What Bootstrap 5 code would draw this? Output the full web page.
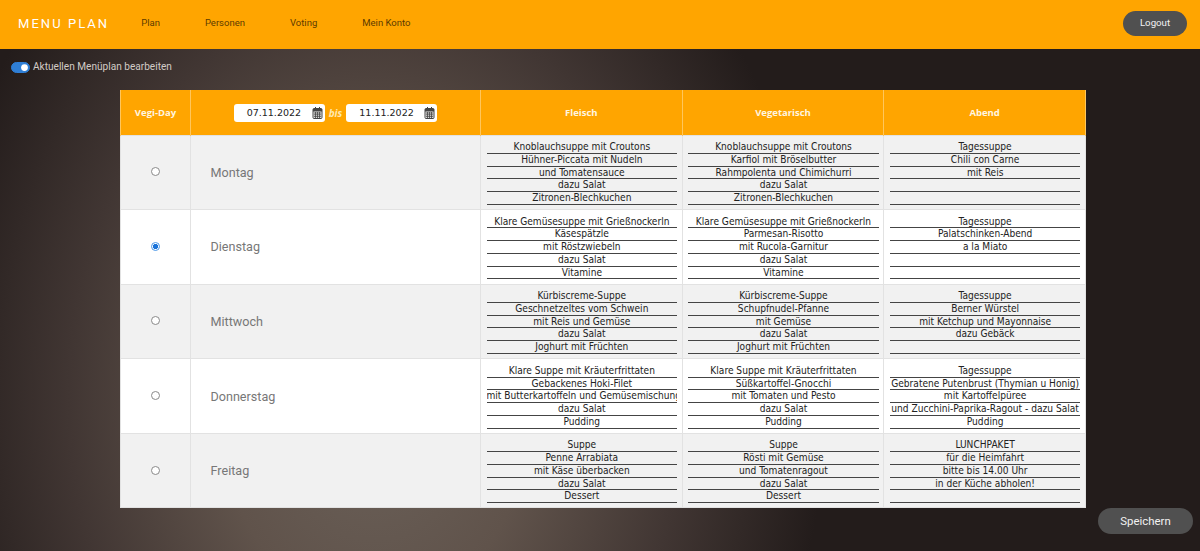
<!DOCTYPE html>
<html lang="de">
<head>
    <meta charset="UTF-8">
    <meta name="viewport" content="width=device-width, initial-scale=1.0">
    <title>Menu Plan</title>
    <link href="https://cdn.jsdelivr.net/npm/bootstrap@5.3.0/dist/css/bootstrap.min.css" rel="stylesheet">
    <style>
        body {
            height: 551px;
            overflow: hidden;
            font-family: Roboto, sans-serif;
            background: radial-gradient(ellipse 450px 600px at 375px 400px, #6c625a 0%, #60534b 35%, #413633 68%, #231c1b 100%) #211a19;
        }
        .top-bar {
            height: 49px;
            background: #ffa500;
            padding: 0 7px 2px 18px;
        }
        .top-bar .navbar-brand {
            font-size: 13px;
            letter-spacing: 2.05px;
            color: #fff;
            margin-right: 32px;
            padding: 0;
        }
        .top-bar .nav-link {
            font-size: 9.5px;
            color: #5c3b00;
            padding: 0;
            margin-right: 45px;
        }
        .pill-btn {
            background: #505050;
            color: #f2f2f2;
            border: 0;
            border-radius: 14px;
        }
        .logout-btn { width: 64px; height: 25px; font-size: 9.7px; padding: 0; margin-right: 6px; }
        .save-btn { width: 95px; height: 26px; font-size: 11.4px; padding: 0; }
        .save-row { padding-right: 7px; }
        .edit-toggle {
            height: 41px;
            padding: 0 0 5px 11px;
            font-size: 10.1px;
            color: #d2cbc6;
        }
        .edit-toggle .form-check { min-height: 0; margin: 0 3px 0 0; padding: 0; display: flex; }
        .edit-toggle .form-check-input { width: 19px; height: 11px; margin: 0; background-color: #2f7fd6; border-color: #2f7fd6; }
        .plan-table {
            width: 965px;
            height: 418px;
            margin: 0 0 0 120px;
            table-layout: fixed;
            border-collapse: collapse;
            background: #fff;
        }
        .plan-table th {
            height: 45px;
            background: #ffa500;
            color: #fff6e0;
            font-family: "Open Sans", sans-serif;
            font-size: 9.5px;
            font-weight: 700;
            text-align: center;
            border: 1px solid #ffc65c;
            border-width: 0 1px;
            padding: 2px 0 0;
            vertical-align: middle;
        }
        .plan-table td {
            height: 74.6px;
            border: 1px solid #e2e2e2;
            padding: 5.5px 4.5px 0 5.5px;
            vertical-align: top;
        }
        .plan-table tbody tr:nth-child(odd) td { background: #f1f1f1; }
        .plan-table td.mid { vertical-align: middle; padding: 0; }
        .col-vegi { width: 70px; }
        .col-date { width: 290px; }
        .col-meal { width: 201.67px; }
        .plan-table .form-check-input {
            display: block;
            width: 9px; height: 9px; margin: 0 auto 1px; float: none;
            border-color: #8a8a8a; background-color: #fff;
        }
        .plan-table .form-check-input:checked {
            background-image: radial-gradient(circle, #1a73d9 52%, #fff 58%);
            border-color: #4a97e8;
        }
        .plan-table td.day-name {
            font-size: 12.6px;
            color: #777;
            padding: 2px 0 0 19.5px;
        }
        .meal-line {
            height: 12.75px;
            line-height: 12px;
            font-family: "DejaVu Sans Condensed", "DejaVu Sans", sans-serif;
            font-size: 10.1px;
            color: #222;
            text-align: center;
            white-space: nowrap;
            overflow: hidden;
            border-bottom: 1px solid #444;
        }
        .date-box {
            width: 91px;
            height: 18px;
            background: #fff;
            border-radius: 3px;
            font-family: "DejaVu Sans", sans-serif;
            font-size: 9.5px;
            font-weight: 400;
            color: #222;
            padding: 0 2px 0 13px;
        }
        .date-sep {
            font-style: italic;
            font-weight: 700;
            color: #ffe9b0;
            font-size: 10px;
        }
    </style>
</head>
<body>
    <nav class="navbar top-bar d-flex flex-nowrap justify-content-between">
        <div class="d-flex align-items-center">
            <a class="navbar-brand" href="#">MENU PLAN</a>
            <div class="d-flex align-items-center">
                <a class="nav-link" href="#">Plan</a>
                <a class="nav-link" href="#">Personen</a>
                <a class="nav-link" href="#">Voting</a>
                <a class="nav-link" href="#">Mein Konto</a>
            </div>
        </div>
        <button type="button" class="btn pill-btn logout-btn">Logout</button>
    </nav>

    <div class="edit-toggle d-flex align-items-center">
        <div class="form-check form-switch">
            <input class="form-check-input" type="checkbox" id="editPlan" checked>
        </div>
        <label for="editPlan">Aktuellen Menüplan bearbeiten</label>
    </div>

    <table class="plan-table" id="planTable">
        <colgroup>
            <col class="col-vegi"><col class="col-date"><col class="col-meal"><col class="col-meal"><col class="col-meal">
        </colgroup>
        <thead>
            <tr>
                <th>Vegi-Day</th>
                <th>
                    <div class="d-flex justify-content-center align-items-center gap-1">
                        <span class="date-box d-flex align-items-center justify-content-between">07.11.2022
                            <svg width="11" height="12" viewBox="0 0 11 12"><rect x="1" y="1.5" width="9" height="10" rx="1" fill="#e8e8e8" stroke="#444"/><path d="M1 2h9v2.5H1z" fill="#444"/><path d="M3.5 0v2.5M7.5 0v2.5" stroke="#444"/><path d="M2 6h7M2 7.8h7M2 9.6h7M3.5 5v6M5.5 5v6M7.5 5v6" stroke="#444" stroke-width=".8"/></svg>
                        </span>
                        <span class="date-sep">bis</span>
                        <span class="date-box d-flex align-items-center justify-content-between">11.11.2022
                            <svg width="11" height="12" viewBox="0 0 11 12"><rect x="1" y="1.5" width="9" height="10" rx="1" fill="#e8e8e8" stroke="#444"/><path d="M1 2h9v2.5H1z" fill="#444"/><path d="M3.5 0v2.5M7.5 0v2.5" stroke="#444"/><path d="M2 6h7M2 7.8h7M2 9.6h7M3.5 5v6M5.5 5v6M7.5 5v6" stroke="#444" stroke-width=".8"/></svg>
                        </span>
                    </div>
                </th>
                <th>Fleisch</th>
                <th>Vegetarisch</th>
                <th>Abend</th>
            </tr>
        </thead>
        <tbody></tbody>
    </table>

    <div class="d-flex justify-content-end save-row">
        <button type="button" class="btn pill-btn save-btn">Speichern</button>
    </div>

    <script src="https://cdn.jsdelivr.net/npm/bootstrap@5.3.0/dist/js/bootstrap.bundle.min.js"></script>
    <script>
        const plan = [
            { day: 'Montag', meals: [
                ['Knoblauchsuppe mit Croutons', 'Hühner-Piccata mit Nudeln', 'und Tomatensauce', 'dazu Salat', 'Zitronen-Blechkuchen'],
                ['Knoblauchsuppe mit Croutons', 'Karfiol mit Bröselbutter', 'Rahmpolenta und Chimichurri', 'dazu Salat', 'Zitronen-Blechkuchen'],
                ['Tagessuppe', 'Chili con Carne', 'mit Reis', '', '']
            ]},
            { day: 'Dienstag', checked: true, meals: [
                ['Klare Gemüsesuppe mit Grießnockerln', 'Käsespätzle', 'mit Röstzwiebeln', 'dazu Salat', 'Vitamine'],
                ['Klare Gemüsesuppe mit Grießnockerln', 'Parmesan-Risotto', 'mit Rucola-Garnitur', 'dazu Salat', 'Vitamine'],
                ['Tagessuppe', 'Palatschinken-Abend', 'a la Miato', '', '']
            ]},
            { day: 'Mittwoch', meals: [
                ['Kürbiscreme-Suppe', 'Geschnetzeltes vom Schwein', 'mit Reis und Gemüse', 'dazu Salat', 'Joghurt mit Früchten'],
                ['Kürbiscreme-Suppe', 'Schupfnudel-Pfanne', 'mit Gemüse', 'dazu Salat', 'Joghurt mit Früchten'],
                ['Tagessuppe', 'Berner Würstel', 'mit Ketchup und Mayonnaise', 'dazu Gebäck', '']
            ]},
            { day: 'Donnerstag', meals: [
                ['Klare Suppe mit Kräuterfrittaten', 'Gebackenes Hoki-Filet', 'mit Butterkartoffeln und Gemüsemischung', 'dazu Salat', 'Pudding'],
                ['Klare Suppe mit Kräuterfrittaten', 'Süßkartoffel-Gnocchi', 'mit Tomaten und Pesto', 'dazu Salat', 'Pudding'],
                ['Tagessuppe', 'Gebratene Putenbrust (Thymian u Honig)', 'mit Kartoffelpüree', 'und Zucchini-Paprika-Ragout - dazu Salat', 'Pudding']
            ]},
            { day: 'Freitag', meals: [
                ['Suppe', 'Penne Arrabiata', 'mit Käse überbacken', 'dazu Salat', 'Dessert'],
                ['Suppe', 'Rösti mit Gemüse', 'und Tomatenragout', 'dazu Salat', 'Dessert'],
                ['LUNCHPAKET', 'für die Heimfahrt', 'bitte bis 14.00 Uhr', 'in der Küche abholen!', '']
            ]}
        ];

        const tbody = document.querySelector('#planTable tbody');
        plan.forEach(function(row) {
            const cells = row.meals.map(function(lines) {
                return '<td>' + lines.map(l => `<div class="meal-line">${l}</div>`).join('') + '</td>';
            }).join('');
            tbody.insertAdjacentHTML('beforeend', `<tr>
                <td class="mid"><input class="form-check-input" type="radio" name="vegiDay" ${row.checked ? 'checked' : ''}></td>
                <td class="mid day-name">${row.day}</td>
                ${cells}
            </tr>`);
        });
    </script>
</body>
</html>
